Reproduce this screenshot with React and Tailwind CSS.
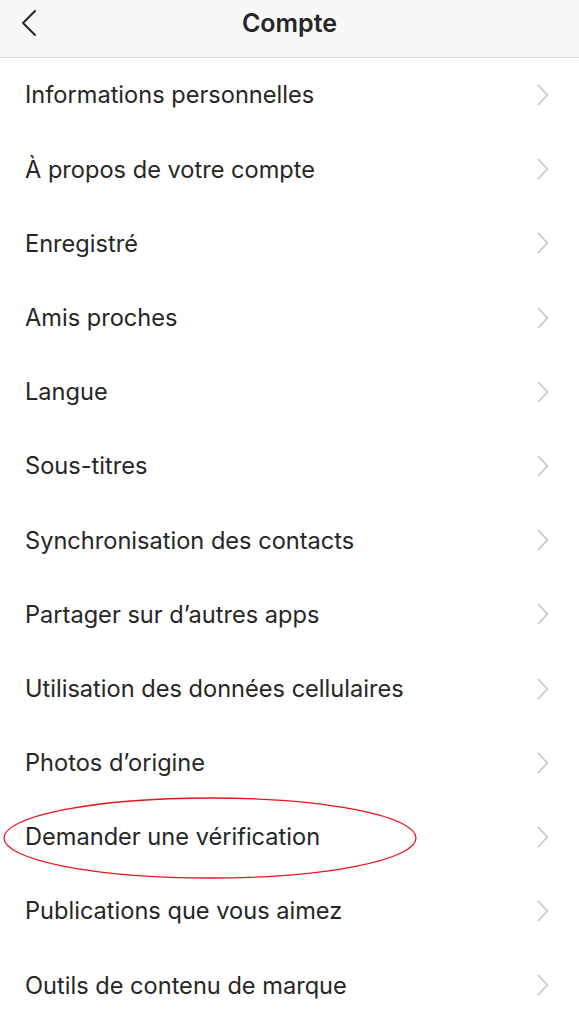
const items = [
  "Informations personnelles",
  "À propos de votre compte",
  "Enregistré",
  "Amis proches",
  "Langue",
  "Sous-titres",
  "Synchronisation des contacts",
  "Partager sur d’autres apps",
  "Utilisation des données cellulaires",
  "Photos d’origine",
  "Demander une vérification",
  "Publications que vous aimez",
  "Outils de contenu de marque",
];

function Row({ label, circled }) {
  return (
    <div className="relative flex h-[74.2px] items-center justify-between pl-[25px] pr-[30px]">
      <span className="text-[23.6px] text-[#262626]">{label}</span>
      <svg width="12" height="22" viewBox="0 0 12 22" fill="none">
        <path d="M1.5 1.5 L10.5 11 L1.5 20.5" stroke="#c7c7cc" strokeWidth="1.8" strokeLinecap="round" strokeLinejoin="round" />
      </svg>
      {circled && (
        <svg className="pointer-events-none absolute left-[3px] top-[-3px]" width="416" height="82" viewBox="0 0 416 82" fill="none">
          <ellipse cx="207" cy="41" rx="206" ry="40" stroke="#e8141b" strokeWidth="1.3" />
        </svg>
      )}
    </div>
  );
}

export default function App() {
  return (
    <div className="h-[1024px] w-[579px] overflow-hidden bg-white font-['Inter','Liberation_Sans',Arial,sans-serif]">
      <div className="relative flex h-[58px] items-center justify-center border-b border-[#dbdbdb] bg-[#f8f8f8]">
        <svg className="absolute left-[20px] top-[9px]" width="18" height="28" viewBox="0 0 18 28" fill="none">
          <path d="M15 2 L3 14 L15 26" stroke="#262626" strokeWidth="2" strokeLinecap="round" strokeLinejoin="round" />
        </svg>
        <span className="mb-[10px] text-[25px] font-semibold text-[#262626]">Compte</span>
      </div>
      {items.map((label) => (
        <Row key={label} label={label} circled={label === "Demander une vérification"} />
      ))}
    </div>
  );
}
